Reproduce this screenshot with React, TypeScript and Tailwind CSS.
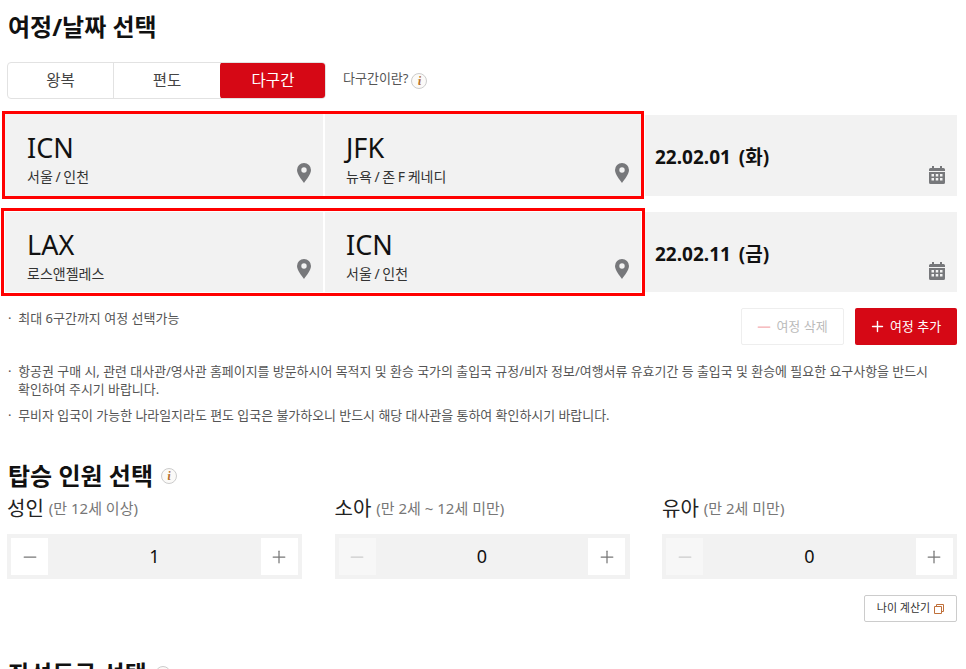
import { Minus, Plus } from 'lucide-react'

const font = { fontFamily: '"Noto Sans", "Noto Sans CJK KR", sans-serif' }

function InfoIcon({ className = '' }: { className?: string }) {
  return (
    <span className={`inline-flex size-[16px] items-center justify-center rounded-full border border-[#ccc] bg-[#fbfaf8] font-serif text-[12px] font-bold italic leading-none text-[#b5702c] ${className}`}>
      i
    </span>
  )
}

function PinIcon() {
  return (
    <svg width="14" height="20" viewBox="0 0 14 20" className="shrink-0">
      <path fillRule="evenodd" fill="#77787b" d="M7 0a7 7 0 0 1 7 7c0 4-4.500 9.500-7 13C4.500 16.500 0 11 0 7a7 7 0 0 1 7-7zm0 4.300a2.700 2.700 0 1 0 0 5.400 2.700 2.700 0 0 0 0-5.400z" />
    </svg>
  )
}

function CalendarIcon() {
  return (
    <svg width="16" height="18" viewBox="0 0 16 18">
      <path fill="#77787b" d="M3 0h2v2h6V0h2v2h1.500A1.500 1.500 0 0 1 16 3.500V5H0V3.500A1.500 1.500 0 0 1 1.500 2H3zM0 6h16v10.500a1.500 1.500 0 0 1-1.500 1.500h-13A1.500 1.500 0 0 1 0 16.500z" />
      <path fill="#f2f2f2" d="M2.500 8h2.500v2.500H2.500zM6.750 8h2.500v2.500h-2.500zM11 8h2.500v2.500H11zM2.500 12h2.500v2.500H2.500zM6.750 12h2.500v2.500h-2.500zM11 12h2.500v2.500H11z" />
    </svg>
  )
}

function Place({ code, name, className }: { code: string; name: string; className: string }) {
  return (
    <div className={`relative flex flex-col bg-[#f2f2f2] ${className}`}>
      <div className="text-[27px] leading-[38px] text-[#111]">{code}</div>
      <div className="text-[14px] leading-[20px] text-[#333] [word-spacing:-1px]">{name}</div>
      <div className="absolute bottom-[13px] right-[12px]">
        <PinIcon />
      </div>
    </div>
  )
}

function DatePanel({ date }: { date: string }) {
  return (
    <div className="relative flex-1 bg-[#f2f2f2] pl-[10px] pt-[28px]">
      <div className="text-[19px] font-bold leading-[28px] text-[#111] [word-spacing:3px]">{date}</div>
      <div className="absolute bottom-[12px] right-[12px]">
        <CalendarIcon />
      </div>
    </div>
  )
}

function Counter({ label, note, value, minusOff }: { label: string; note: string; value: number; minusOff?: boolean }) {
  return (
    <div className="w-[295px]">
      <div className="flex h-[27px] items-center gap-[5px]">
        <span className="text-[20px] text-[#222]">{label}</span>
        <span className="text-[15px] text-[#777]">{note}</span>
      </div>
      <div className="mt-[12px] flex h-[45px] items-center justify-between bg-[#f2f2f2] px-[4px]">
        <div className={`flex size-[37px] items-center justify-center ${minusOff ? 'bg-[#f7f7f7] text-[#ccc]' : 'bg-white text-[#777]'}`}>
          <Minus size={20} strokeWidth={1.5} />
        </div>
        <span className="text-[18px] text-[#111]">{value}</span>
        <div className="flex size-[37px] items-center justify-center bg-white text-[#777]">
          <Plus size={20} strokeWidth={1.5} />
        </div>
      </div>
    </div>
  )
}

export default function App() {
  return (
    <div style={font} className="h-[669px] w-[966px] overflow-hidden bg-white pl-[8px] pr-[9px]">
      <h2 className="pt-[9px] text-[24px] font-bold leading-[36px] text-[#111]">여정/날짜 선택</h2>

      <div className="mt-[17px] flex items-center">
        <div className="flex h-[37px] w-[319px] -ml-[1px] overflow-hidden rounded-[4px] border border-[#e2e2e2] text-[15.500px] text-[#444]">
          <div className="flex w-[106px] items-center justify-center border-r border-[#e2e2e2]">왕복</div>
          <div className="flex w-[106px] items-center justify-center">편도</div>
          <div className="-my-px -mr-px flex flex-1 items-center justify-center rounded-[4px] bg-[#d60815] text-white">다구간</div>
        </div>
        <span className="ml-[17px] -mt-[3px] text-[13px] text-[#555]">다구간이란?</span>
        <InfoIcon className="ml-[3px]" />
      </div>

      <div className="mt-[16px] flex flex-col gap-[16px]">
        <div className="flex h-[81px]">
          <div className="-ml-[3px] -mt-px flex h-[82px] w-[636px] gap-[2px] outline-[3px] outline-solid outline-[#f00]">
            <Place code="ICN" name="서울 / 인천" className="w-[318px] pl-[22px] pt-[15px]" />
            <Place code="JFK" name="뉴욕 / 존 F 케네디" className="flex-1 pl-[21px] pt-[15px]" />
          </div>
          <div className="w-[4px]" />
          <DatePanel date="22.02.01 (화)" />
        </div>
        <div className="flex h-[80px]">
          <div className="-ml-[3px] flex w-[636px] gap-[2px] outline-[3px] outline-offset-1 outline-solid outline-[#f00]">
            <Place code="LAX" name="로스앤젤레스" className="w-[318px] pl-[22px] pt-[14px]" />
            <Place code="ICN" name="서울 / 인천" className="flex-1 pl-[21px] pt-[14px]" />
          </div>
          <div className="w-[4px]" />
          <DatePanel date="22.02.11 (금)" />
        </div>
      </div>

      <div className="mt-[16px] flex items-start justify-between">
        <p className="pt-[1px] text-[13px] leading-[18px] text-[#555]">· &nbsp;최대 6구간까지 여정 선택가능</p>
        <div className="flex gap-[11px]">
          <div className="flex h-[37px] w-[103px] items-center justify-center gap-[2px] rounded-[2px] border border-[#eee] pr-[3px] text-[13px] text-[#bbb]">
            <Minus size={20} strokeWidth={1.5} className="text-[#f3a9ad]" />여정 삭제
          </div>
          <div className="flex h-[37px] w-[102px] items-center justify-center gap-[4px] rounded-[2px] bg-[#d60815] pr-[2px] text-[13px] text-white">
            <Plus size={17} strokeWidth={2} />여정 추가
          </div>
        </div>
      </div>

      <div className="mt-[17px] flex flex-col gap-[8px] text-[12.950px] leading-[18px] text-[#555]">
        <p className="pl-[10px] -indent-[10px] pr-[20px]">· &nbsp;항공권 구매 시, 관련 대사관/영사관 홈페이지를 방문하시어 목적지 및 환승 국가의 출입국 규정/비자 정보/여행서류 유효기간 등 출입국 및 환승에 필요한 요구사항을 반드시 확인하여 주시기 바랍니다.</p>
        <p>· &nbsp;무비자 입국이 가능한 나라일지라도 편도 입국은 불가하오니 반드시 해당 대사관을 통하여 확인하시기 바랍니다.</p>
      </div>

      <div className="mt-[34px] flex h-[36px] items-center gap-[8px]">
        <h2 className="text-[24px] font-bold leading-[36px] text-[#111]">탑승 인원 선택</h2>
        <InfoIcon />
      </div>

      <div className="-ml-px mt-[1px] flex justify-between">
        <Counter label="성인" note="(만 12세 이상)" value={1} />
        <Counter label="소아" note="(만 2세 ~ 12세 미만)" value={0} minusOff />
        <Counter label="유아" note="(만 2세 미만)" value={0} minusOff />
      </div>

      <div className="mt-[16px] flex justify-end">
        <div className="flex h-[27px] w-[93px] items-center justify-center gap-[4px] rounded-[2px] border border-[#ccc] text-[11px] text-[#333]">
          나이 계산기
          <svg width="10" height="10" viewBox="0 0 10 10" fill="none" stroke="#c0703a" strokeWidth="1">
            <path d="M.5 2.500h7v7h-7zM2.500 2.500v-2h7v7h-2" />
          </svg>
        </div>
      </div>

      <div className="mt-[34px] flex h-[36px] items-center gap-[8px]">
        <h2 className="text-[24px] font-bold leading-[36px] text-[#111]">좌석등급 선택</h2>
        <InfoIcon />
      </div>
    </div>
  )
}
